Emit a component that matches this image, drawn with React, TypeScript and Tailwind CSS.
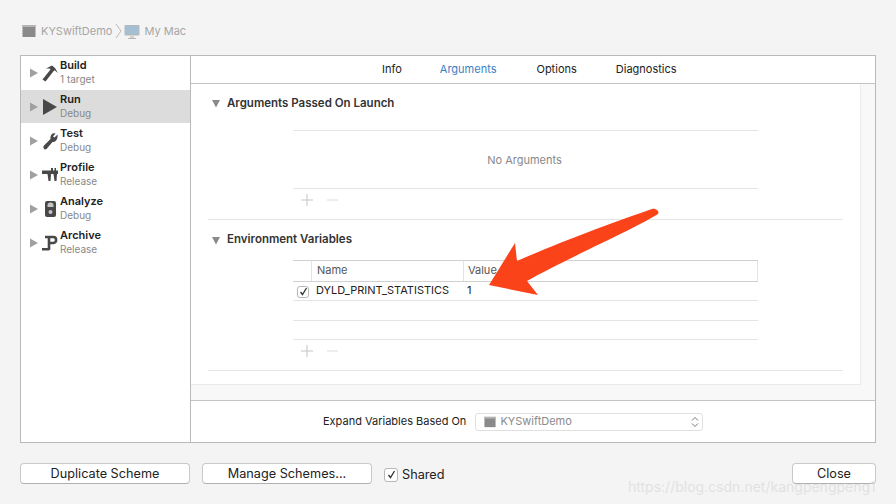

const font = { fontFamily: "Inter, 'Liberation Sans', sans-serif" };

function Hammer() {
  return (
    <svg width="16" height="17" viewBox="0 0 16 17" fill="#484848">
      <path d="M4 3.5 L10 .5 L13 3 L16 8 L12.5 5.2 L11.5 6.2 L3.5 16.5 L.5 14.5 L8.5 4.5 L7.5 3.5 Z" />
    </svg>
  );
}
function Play() {
  return <svg width="16" height="18" viewBox="0 0 16 18" fill="#484848"><path d="M1 1 L15 9 L1 17 Z" /></svg>;
}
function Wrench() {
  return (
    <svg width="15" height="17" viewBox="0 0 15 17" fill="#484848">
      <path d="M14.5 1.5 L11.5 4.5 L10 3.5 L12.5 .5 C9.5 -.5 7 2 7.5 6 L1 12.5 C-.5 14.5 1 17.5 3.5 16 L9.5 9 C12.5 9.5 15 6.5 14.5 1.5 Z" />
    </svg>
  );
}
function Caliper() {
  return (
    <svg width="16" height="14" viewBox="0 0 16 14" fill="#484848">
      <path d="M0 2.5 H9 V0 H11 V2.5 H12.5 V0 H14 V2.5 H16 V6 H15 L14.5 13 H12.5 L11.5 6 H9 L8.5 13 H6.5 L5.5 6 H0 Z" />
    </svg>
  );
}
function Analyze() {
  return (
    <svg width="11" height="16" viewBox="0 0 11 16">
      <rect x="0" y="0" width="11" height="16" rx="2" fill="#484848" />
      <path d="M2.5 6 V4.5 A3 3 0 0 1 8.5 4.5 V6 Z" fill="#c4c4c4" />
      <circle cx="5.5" cy="11" r="2" fill="#c4c4c4" />
    </svg>
  );
}
function Archive() {
  return (
    <svg width="16" height="16" viewBox="0 0 16 16" fill="none" stroke="#484848" strokeWidth="2.6">
      <path d="M3 2 H11.5 C15 2 15 8 11.5 8 H7 M7 1 V15 M0 14.2 H7" />
    </svg>
  );
}
function Disclosure() {
  return <svg width="9" height="10" viewBox="0 0 9 10" fill="#a0a0a0"><path d="M0 .5 L8 5 L0 9.5 Z" /></svg>;
}
function DownTri() {
  return <svg width="10" height="9" viewBox="0 0 10 9" fill="#8a8a8a"><path d="M1 1 H9 L5 8.5 Z" /></svg>;
}
function AppIcon({ size = 14 }: { size?: number }) {
  return (
    <svg width={size} height={size} viewBox="0 0 14 14">
      <rect x="0.5" y="1" width="13" height="12" fill="#8a8a8a" />
      <rect x="0.5" y="1" width="13" height="2" fill="#b5b5b5" />
    </svg>
  );
}
function MacIcon() {
  return (
    <svg width="16" height="16" viewBox="0 0 16 16">
      <rect x="0.5" y="1" width="15" height="10.5" rx="1" fill="#b4b8bc" />
      <rect x="1.5" y="2" width="13" height="8" fill="#a5bfd2" />
      <rect x="6" y="11.5" width="4" height="2.5" fill="#d2d2d2" />
      <rect x="4" y="14" width="8" height="1" fill="#b5b5b5" />
    </svg>
  );
}
function PlusMinus() {
  return (
    <div className="flex items-center gap-[14px] h-[22px] pl-[8px]">
      <svg width="12" height="12" viewBox="0 0 12 12" stroke="#c4c4c4"><path d="M6 0 V12 M0 6 H12" /></svg>
      <svg width="11" height="12" viewBox="0 0 11 12" stroke="#dcdcdc"><path d="M0 6 H11" /></svg>
    </div>
  );
}
function Check({ box = 12 }: { box?: number }) {
  return (
    <span className="flex items-center justify-center rounded-[3px] border border-[#b8b8b8] bg-white" style={{ width: box, height: box }}>
      <svg width="9" height="9" viewBox="0 0 9 9" fill="none" stroke="#333" strokeWidth="1.3"><path d="M1.5 5 L3.5 7.5 L7.5 1" /></svg>
    </span>
  );
}

const rows = [
  { name: "Build", sub: "1 target", Icon: Hammer },
  { name: "Run", sub: "Debug", Icon: Play, active: true },
  { name: "Test", sub: "Debug", Icon: Wrench },
  { name: "Profile", sub: "Release", Icon: Caliper },
  { name: "Analyze", sub: "Debug", Icon: Analyze },
  { name: "Archive", sub: "Release", Icon: Archive },
];

function Btn({ label, w }: { label: string; w: string }) {
  return (
    <button className={`${w} h-[21px] rounded-[4px] bg-white border border-[#c9c9c9] border-b-[#b0b0b0] text-[12.7px] text-[#222] flex items-center justify-center pt-[1px]`}>
      {label}
    </button>
  );
}

export default function App() {
  return (
    <div className="relative w-[896px] h-[504px] overflow-hidden bg-[#f4f4f4] flex flex-col" style={font}>
      <div className="h-[55px] pl-[22px] pt-[24px] flex items-start text-[11px] text-[#a6a6a6] leading-[14px]">
        <AppIcon />
        <span className="ml-[5px]">KYSwiftDemo</span>
        <svg width="8" height="16" viewBox="0 0 8 16" fill="none" stroke="#bbb" className="-mt-px ml-[3px]"><path d="M1 1 L6 8 L1 15" /></svg>
        <span className="ml-[1px]"><MacIcon /></span>
        <span className="ml-[4px]">My Mac</span>
      </div>

      <div className="mx-[20px] h-[388px] w-[856px] border border-[#b9b9b9] bg-white flex">
        <div className="w-[170px] shrink-0 border-r border-[#b9b9b9] flex flex-col">
          {rows.map((r) => (
            <div key={r.name} className={`flex items-center pl-[9px] ${r.active ? "h-[33px] mb-px bg-[#dcdcdc]" : "h-[34px]"}`}>
              <span className="w-[10px]"><Disclosure /></span>
              <span className="w-[20px] flex justify-center"><r.Icon /></span>
              <div className={`flex flex-col ${r.active ? "-mt-[2px]" : "-mt-[3px]"}`}>
                <span className="text-[11px] leading-[14px] font-semibold text-[#222]">{r.name}</span>
                <span className="text-[10px] leading-[14px] text-[#888]">{r.sub}</span>
              </div>
            </div>
          ))}
        </div>

        <div className="flex-1 flex flex-col bg-[#f8f8f8]">
          <div className="h-[28px] bg-white border-b border-[#c4c4c4] flex items-center text-[11px] text-[#222]">
            <span className="ml-[191px]">Info</span>
            <span className="ml-[38px] text-[#3a7fc4]">Arguments</span>
            <span className="ml-[40px]">Options</span>
            <span className="ml-[39px]">Diagnostics</span>
          </div>

          <div className="h-[301px] w-[670px] bg-white border-b border-r border-[#ebebeb] pl-[17px] shrink-0">
            <div className="h-[136px] w-[635px] border-b border-[#e4e4e4] flex flex-col">
              <div className="h-[46px] pb-[7px] flex items-center gap-[6px] pl-[3px] text-[11.5px] font-semibold text-[#333]">
                <DownTri /> Arguments Passed On Launch
              </div>
              <div className="ml-[85px] w-[465px] h-[59px] border-y border-[#e4e4e4] flex items-center justify-center pt-[1px] pr-[2px] text-[11px] text-[#888]">
                No Arguments
              </div>
              <div className="ml-[85px]"><PlusMinus /></div>
            </div>

            <div className="w-[635px] h-[151px] border-b border-[#e4e4e4] flex flex-col">
              <div className="h-[40px] flex items-center gap-[6px] pl-[3px] text-[11.5px] font-semibold text-[#333]">
                <DownTri /> Environment Variables
              </div>
              <div className="ml-[85px] w-[465px] flex flex-col">
                <div className="h-[22px] border-y border-[#d0d0d0] flex items-center text-[11px] text-[#555]">
                  <span className="w-[19px] h-full border-r border-[#e4e4e4]" />
                  <span className="pl-[5px] pb-[1px] w-[152px] h-full flex items-center border-r border-[#e4e4e4]">Name</span>
                  <span className="pl-[4px] pb-[1px] flex-1">Value</span>
                  <span className="h-full border-r border-[#e4e4e4]" />
                </div>
                <div className="h-[19px] border-b border-[#e4e4e4] flex items-center text-[11px] text-[#222]">
                  <span className="w-[23px] pl-[4px] pt-[1px]"><Check /></span>
                  <span className="w-[151px] pb-[1px]">DYLD_PRINT_STATISTICS</span>
                  <span className="pb-[1px]">1</span>
                </div>
                <div className="h-[20px] border-b border-[#e4e4e4]" />
                <div className="h-[19px] border-b border-[#e4e4e4]" />
                <PlusMinus />
              </div>
            </div>
          </div>

          <div className="flex-1" />
          <div className="h-[42px] border-t border-[#c4c4c4] bg-white flex items-center text-[11px] text-[#222]">
            <span className="ml-[132px]">Expand Variables Based On</span>
            <div className="ml-[9px] w-[228px] h-[18px] rounded-[3px] border border-[#e0e0e0] bg-white flex items-center pl-[8px] gap-[4px] text-[#8a8a8a]">
              <AppIcon size={12} />
              <span className="flex-1">KYSwiftDemo</span>
              <svg width="8" height="12" viewBox="0 0 8 12" fill="none" stroke="#777" className="mr-[3px]"><path d="M1 4.5 L4 1.5 L7 4.5 M1 7.5 L4 10.5 L7 7.5" /></svg>
            </div>
          </div>
        </div>
      </div>

      <div className="h-[20px] mt-[20px] mx-[20px] flex items-center text-[#222]">
        <Btn label="Duplicate Scheme" w="w-[170px]" />
        <div className="w-[12px]" />
        <Btn label="Manage Schemes..." w="w-[170px]" />
        <div className="ml-[12px] pt-[3px] flex items-center gap-[4px] text-[12.7px]">
          <Check box={14} /> Shared
        </div>
        <div className="flex-1" />
        <Btn label="Close" w="w-[84px]" />
      </div>

      <svg className="absolute left-0 top-0 pointer-events-none" width="896" height="504" viewBox="0 0 896 504">
        <path d="M652 209 C655 208 660 211 658 214 C640 226 560 262 527 281 L538 295 L489 285 L515 243 L517 261 C560 242 620 220 652 209 Z" fill="#fb4319" />
      </svg>

      <span className="absolute left-[628px] top-[476px] text-[14px] text-[#dcdcdc]/80">https://blog.csdn.net/kangpengpeng1</span>
    </div>
  );
}
